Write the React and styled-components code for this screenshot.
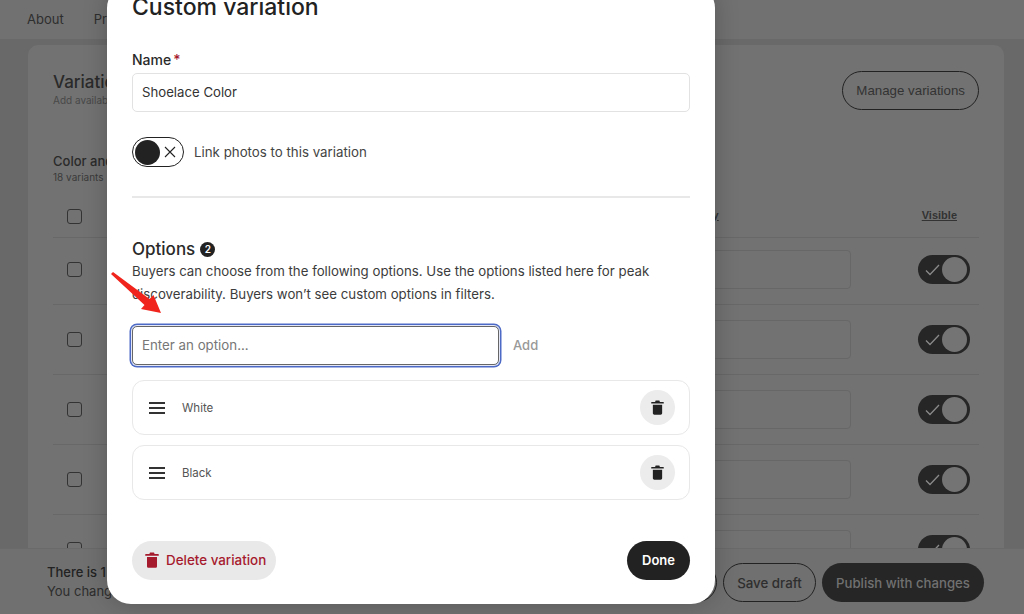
import styled, { createGlobalStyle } from 'styled-components';

const GlobalStyle = createGlobalStyle`
  html, body {
    margin: 0;
    padding: 0;
    width: 1024px;
    height: 614px;
    overflow: hidden;
    background: #696969;
    font-family: Inter, 'Liberation Sans', sans-serif;
    color: #222;
  }
  * {
    box-sizing: border-box;
  }
`;

const Page = styled.div`
  position: relative;
  width: 1024px;
  height: 614px;
  overflow: hidden;
  display: flex;
  flex-direction: column;
`;

const NavBar = styled.div`
  flex: 0 0 39px;
  background: #717171;
  display: flex;
  align-items: center;
  gap: 30px;
  padding: 0 27px 2px;
  font-size: 13px;
  color: #2e2e2e;
`;

const Content = styled.div`
  flex: 1;
  min-height: 0;
  padding: 6px 20px 0 28px;
  overflow: hidden;
`;

const Card = styled.div`
  background: #727272;
  border-radius: 10px 10px 0 0;
  padding: 27px 25px 0;
  height: 600px;
`;

const CardHeader = styled.div`
  display: flex;
  justify-content: space-between;
  align-items: flex-start;
`;

const CardTitle = styled.div`
  font-size: 17px;
  font-weight: 500;
  color: #2a2a2a;
`;

const CardSub = styled.div`
  font-size: 10px;
  color: #484848;
  margin-top: 2px;
`;

const OutlineButton = styled.div`
  margin-top: -1px;
  border: 1.5px solid #222;
  border-radius: 20px;
  height: 39px;
  display: flex;
  align-items: center;
  padding: 0 13px;
  font-size: 13.3px;
  color: #333;
  font-family: 'Liberation Sans', sans-serif;
`;

const GroupTitle = styled.div`
  margin-top: 43px;
  font-size: 13px;
  font-weight: 500;
  color: #2a2a2a;
`;

const GroupSub = styled.div`
  font-size: 10px;
  margin-top: 2px;
  color: #3a3a3a;
`;

const Row = styled.div`
  height: 70px;
  display: flex;
  align-items: center;
  padding: 0 9px 0 14px;
  border-bottom: 1px solid #686868;
`;

const HeadRow = styled(Row)`
  height: 33px;
  margin-top: 22px;
  margin-bottom: -3px;
  align-items: flex-start;
  padding: 4px 22px 0 14px;
`;

const CheckBox = styled.div`
  width: 15px;
  height: 15px;
  border: 1.5px solid #333;
  border-radius: 3px;
`;

const Qty = styled.div`
  margin-left: auto;
  width: 190px;
  height: 39px;
  border: 1px solid #676767;
  border-radius: 4px;
`;

const ColumnLabel = styled.div`
  margin-left: ${(props) => props.$gap};
  font-family: 'Liberation Sans', sans-serif;
  font-size: 11px;
  font-weight: 700;
  color: #333;
  text-decoration: underline;
`;

const SwitchOn = styled.div`
  margin-left: 67px;
  width: 52px;
  height: 29px;
  border-radius: 15px;
  background: #262626;
  display: flex;
  align-items: center;
  justify-content: space-between;
  padding: 0 3px 0 7px;
`;

const Knob = styled.div`
  width: 25px;
  height: 25px;
  border-radius: 50%;
  background: ${(props) => props.$color};
`;

const BottomBar = styled.div`
  position: absolute;
  left: 0;
  right: 0;
  bottom: 0;
  height: 66px;
  background: #707070;
  border-top: 1px solid #6a6a6a;
  display: flex;
  align-items: center;
  justify-content: space-between;
  padding: 0 40px 0 47px;
`;

const BarText = styled.div`
  font-size: 13px;
  line-height: 19px;
  color: #2d2d2d;
  b {
    font-weight: 500;
    color: #222;
    display: block;
  }
`;

const BarButtons = styled.div`
  display: flex;
  gap: 6px;
  padding-top: 2px;
`;

const BarOutline = styled.div`
  height: 39px;
  width: ${(props) => props.$width}px;
  border: 1.5px solid #222;
  border-radius: 20px;
  display: flex;
  align-items: center;
  justify-content: center;
  font-size: 13.3px;
  font-weight: 500;
  color: #2e2e2e;
`;

const BarFilled = styled.div`
  height: 39px;
  width: 162px;
  border-radius: 20px;
  background: #262626;
  display: flex;
  align-items: center;
  justify-content: center;
  font-size: 13.2px;
  font-weight: 500;
  color: #717171;
`;

const Modal = styled.div`
  position: absolute;
  left: 107px;
  bottom: 10px;
  width: 608px;
  height: 620px;
  background: #fff;
  border-radius: 24px;
  box-shadow: 0 0 24px rgba(0, 0, 0, 0.22);
  padding: 0 25px;
  display: flex;
  flex-direction: column;
`;

const ModalTitle = styled.h2`
  margin: 8px 0 0;
  font-size: 23px;
  line-height: 30px;
  font-weight: 500;
  color: #222;
`;

const FieldLabel = styled.div`
  margin-top: 29px;
  font-size: 14px;
  line-height: 18px;
  font-weight: 500;
  color: #2a2a2a;
  span {
    color: #a61a2e;
    margin-left: 2px;
  }
`;

const NameInput = styled.div`
  margin-top: 4px;
  height: 39px;
  border: 1px solid #e2e2e2;
  border-radius: 5px;
  display: flex;
  align-items: center;
  padding: 0 9px 1px;
  font-size: 13.2px;
  color: #333;
`;

const ToggleRow = styled.div`
  margin-top: 25px;
  display: flex;
  align-items: center;
  gap: 10px;
  font-size: 13.3px;
  color: #444;
`;

const SwitchOff = styled.div`
  width: 52px;
  height: 30px;
  border: 1.5px solid #222;
  border-radius: 15px;
  display: flex;
  align-items: center;
  justify-content: space-between;
  padding: 0 7px 0 2px;
`;

const Divider = styled.hr`
  margin: 29px 0 0;
  border: 0;
  height: 2px;
  background: #e8e8e8;
`;

const OptionsTitle = styled.div`
  margin-top: 41px;
  display: flex;
  align-items: center;
  gap: 5px;
  font-size: 17px;
  line-height: 20px;
  font-weight: 500;
  color: #2a2a2a;
`;

const CountBadge = styled.span`
  width: 15px;
  height: 15px;
  border-radius: 50%;
  background: #222;
  color: #fff;
  font-size: 10px;
  font-weight: 600;
  display: flex;
  align-items: center;
  justify-content: center;
`;

const Help = styled.p`
  margin: 1px 0 0;
  font-size: 13.25px;
  line-height: 23px;
  color: #3c3c3c;
`;

const AddRow = styled.div`
  margin-top: 20px;
  display: flex;
  align-items: center;
  gap: 14px;
`;

const OptionInput = styled.div`
  width: 367px;
  height: 39px;
  border: 1px solid #666;
  border-radius: 5px;
  box-shadow: 0 0 0 1px #e4e8f6, 0 0 0 2.5px #4d6bc6;
  display: flex;
  align-items: center;
  padding: 0 9px 1px;
  font-size: 13.3px;
  color: #777;
`;

const AddLabel = styled.div`
  font-size: 13px;
  font-weight: 500;
  color: #999;
  padding-bottom: 1px;
`;

const OptionList = styled.div`
  margin-top: 15px;
  display: flex;
  flex-direction: column;
  gap: 10px;
`;

const OptionCard = styled.div`
  height: 55px;
  border: 1px solid #e8e8e8;
  border-radius: 12px;
  display: flex;
  align-items: center;
  padding: 0 14px 0 16px;
  font-size: 11.5px;
  color: #555;
`;

const DragHandle = styled.svg`
  width: 16px;
  height: 14px;
  margin-right: 17px;
`;

const RoundIcon = styled.div`
  margin-left: auto;
  width: 35px;
  height: 35px;
  border-radius: 50%;
  background: #ececec;
  display: flex;
  align-items: center;
  justify-content: center;
`;

const ModalFooter = styled.div`
  margin-top: 41px;
  display: flex;
  justify-content: space-between;
  align-items: center;
`;

const DeleteButton = styled.div`
  height: 39px;
  width: 144px;
  border-radius: 20px;
  background: #e9e9e9;
  display: flex;
  align-items: center;
  gap: 7px;
  padding: 0 0 1px 13px;
  font-size: 13.4px;
  font-weight: 500;
  color: #a61a2e;
`;

const DoneButton = styled.div`
  height: 39px;
  width: 63px;
  border-radius: 20px;
  background: #222;
  display: flex;
  align-items: center;
  justify-content: center;
  padding-bottom: 1px;
  font-size: 13px;
  font-weight: 600;
  color: #fff;
`;

const Arrow = styled.svg`
  position: absolute;
  left: 105px;
  top: 265px;
  width: 70px;
  height: 55px;
`;

const Trash = ({ color = '#222', size = 14 }) => (
  <svg width={size} height={size * 1.15} viewBox="0 0 14 16" fill={color}>
    <path d="M5 0.5h4l.6 1.5H13a.7.7 0 0 1 0 1.8H1A.7.7 0 0 1 1 2h3.4z" />
    <path d="M2 5h10v9.2c0 .9-.7 1.6-1.6 1.6H3.6c-.9 0-1.6-.7-1.6-1.6z" />
  </svg>
);

const rows = [0, 1, 2, 3, 4];

function App() {
  return (
    <>
      <GlobalStyle />
      <Page>
        <NavBar>
          <span>About</span>
          <span>Price &amp; Inventory</span>
        </NavBar>
        <Content>
          <Card>
            <CardHeader>
              <div>
                <CardTitle>Variations</CardTitle>
                <CardSub>Add available options</CardSub>
              </div>
              <OutlineButton>Manage variations</OutlineButton>
            </CardHeader>
            <GroupTitle>Color and size</GroupTitle>
            <GroupSub>18 variants</GroupSub>
            <HeadRow>
              <CheckBox />
              <ColumnLabel $gap="auto">Quantity</ColumnLabel>
              <ColumnLabel $gap="203px">Visible</ColumnLabel>
            </HeadRow>
            {rows.map((row) => (
              <Row key={row}>
                <CheckBox />
                <Qty />
                <SwitchOn>
                  <svg width="15" height="12" viewBox="0 0 15 12" fill="none" stroke="#8a8a8a" strokeWidth="1.3">
                    <path d="M1 6.5l4 4L14 1" />
                  </svg>
                  <Knob $color="#747474" />
                </SwitchOn>
              </Row>
            ))}
          </Card>
        </Content>
        <BottomBar>
          <BarText>
            <b>There is 1 change</b>
            You changed a listing
          </BarText>
          <BarButtons>
            <BarOutline $width={90}>Preview</BarOutline>
            <BarOutline $width={93}>Save draft</BarOutline>
            <BarFilled>Publish with changes</BarFilled>
          </BarButtons>
        </BottomBar>
        <Modal>
          <ModalTitle>Custom variation</ModalTitle>
          <FieldLabel>
            Name<span>*</span>
          </FieldLabel>
          <NameInput>Shoelace Color</NameInput>
          <ToggleRow>
            <SwitchOff>
              <Knob $color="#222" />
              <svg width="12" height="12" viewBox="0 0 12 12" stroke="#222" strokeWidth="1.1">
                <path d="M1 1l10 10M11 1L1 11" />
              </svg>
            </SwitchOff>
            Link photos to this variation
          </ToggleRow>
          <Divider />
          <OptionsTitle>
            Options <CountBadge>2</CountBadge>
          </OptionsTitle>
          <Help>
            Buyers can choose from the following options. Use the options listed here for peak
            <br />
            discoverability. Buyers won’t see custom options in filters.
          </Help>
          <AddRow>
            <OptionInput>Enter an option...</OptionInput>
            <AddLabel>Add</AddLabel>
          </AddRow>
          <OptionList>
            {['White', 'Black'].map((name) => (
              <OptionCard key={name}>
                <DragHandle viewBox="0 0 16 14" stroke="#333" strokeWidth="1.8">
                  <path d="M0 2h16M0 7h16M0 12h16" />
                </DragHandle>
                {name}
                <RoundIcon>
                  <Trash size={13} />
                </RoundIcon>
              </OptionCard>
            ))}
          </OptionList>
          <ModalFooter>
            <DeleteButton>
              <Trash color="#a61a2e" />
              Delete variation
            </DeleteButton>
            <DoneButton>Done</DoneButton>
          </ModalFooter>
        </Modal>
        <Arrow viewBox="0 0 70 55">
          <polygon points="6,9 8,7 44.5,34 48.5,30 56,48 36,44 39.5,40" fill="#f0241c" />
        </Arrow>
      </Page>
    </>
  );
}

export default App;
